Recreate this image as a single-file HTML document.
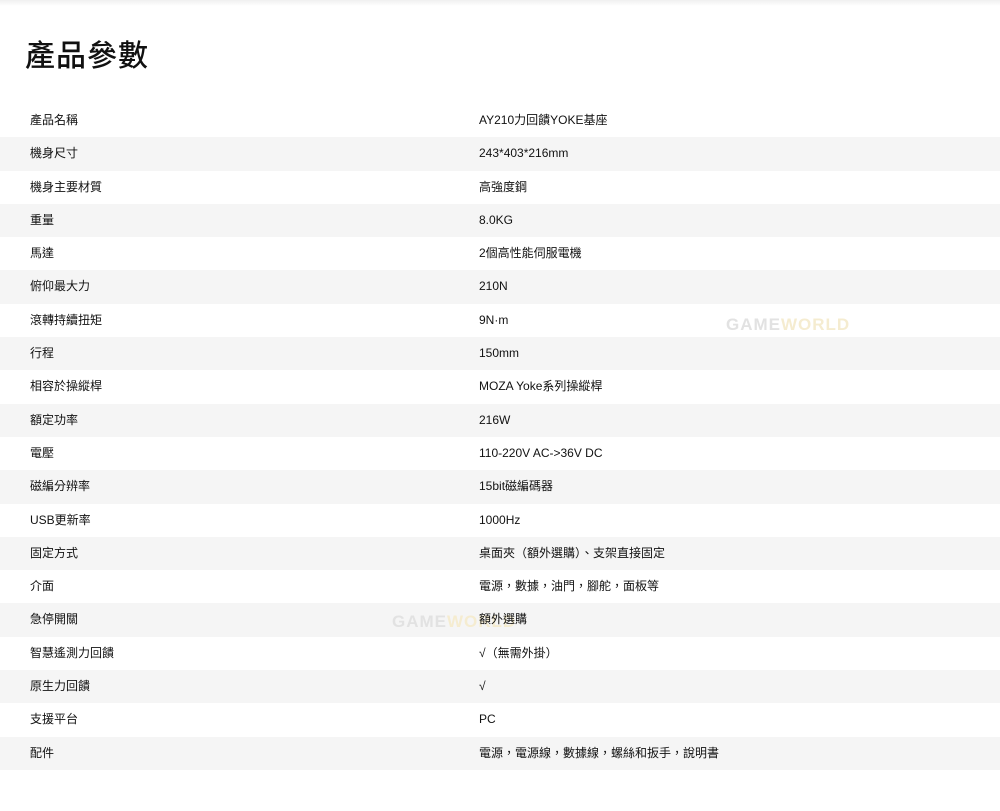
<!DOCTYPE html>
<html><head><meta charset="utf-8"><style>
body{margin:0;width:1000px;height:811px;background:#fff;font-family:"Liberation Sans","Noto Sans CJK TC",sans-serif;color:#111;overflow:hidden;position:relative}
.top{position:absolute;left:0;top:0;width:1000px;height:6px;background:linear-gradient(#f0f0f0,#fff)}
h1{position:absolute;left:25px;top:31px;margin:0;font-size:30px;font-weight:500;line-height:44px;letter-spacing:1px;font-family:"Noto Sans CJK TC",sans-serif;}
.t{position:absolute;left:0;top:104px;width:1000px}
.r{height:33.3px;line-height:33.3px;font-size:12px;position:relative}
.r:nth-child(even){background:#f5f5f5}
.a{position:absolute;left:30px;z-index:2}.b{position:absolute;left:479px;z-index:2}
.wm{position:absolute;font:bold 17px "Liberation Sans",sans-serif;letter-spacing:1px;color:#e2e2e2;z-index:1}
.wm span{color:#f5ecd0}
</style></head><body>
<div class="top"></div>
<h1>產品參數</h1>
<div class="wm" style="left:726px;top:315px">GAME<span>WORLD</span></div>
<div class="wm" style="left:392px;top:612px">GAME<span>WORLD</span></div>
<div class="t">
<div class="r"><span class="a">產品名稱</span><span class="b">AY210力回饋YOKE基座</span></div>
<div class="r"><span class="a">機身尺寸</span><span class="b">243*403*216mm</span></div>
<div class="r"><span class="a">機身主要材質</span><span class="b">高強度鋼</span></div>
<div class="r"><span class="a">重量</span><span class="b">8.0KG</span></div>
<div class="r"><span class="a">馬達</span><span class="b">2個高性能伺服電機</span></div>
<div class="r"><span class="a">俯仰最大力</span><span class="b">210N</span></div>
<div class="r"><span class="a">滾轉持續扭矩</span><span class="b">9N·m</span></div>
<div class="r"><span class="a">行程</span><span class="b">150mm</span></div>
<div class="r"><span class="a">相容於操縱桿</span><span class="b">MOZA Yoke系列操縱桿</span></div>
<div class="r"><span class="a">額定功率</span><span class="b">216W</span></div>
<div class="r"><span class="a">電壓</span><span class="b">110-220V AC-&gt;36V DC</span></div>
<div class="r"><span class="a">磁編分辨率</span><span class="b">15bit磁編碼器</span></div>
<div class="r"><span class="a">USB更新率</span><span class="b">1000Hz</span></div>
<div class="r"><span class="a">固定方式</span><span class="b">桌面夾（額外選購）、支架直接固定</span></div>
<div class="r"><span class="a">介面</span><span class="b">電源，數據，油門，腳舵，面板等</span></div>
<div class="r"><span class="a">急停開關</span><span class="b">額外選購</span></div>
<div class="r"><span class="a">智慧遙測力回饋</span><span class="b">√（無需外掛）</span></div>
<div class="r"><span class="a">原生力回饋</span><span class="b">√</span></div>
<div class="r"><span class="a">支援平台</span><span class="b">PC</span></div>
<div class="r"><span class="a">配件</span><span class="b">電源，電源線，數據線，螺絲和扳手，說明書</span></div>
</div>
</body></html>
